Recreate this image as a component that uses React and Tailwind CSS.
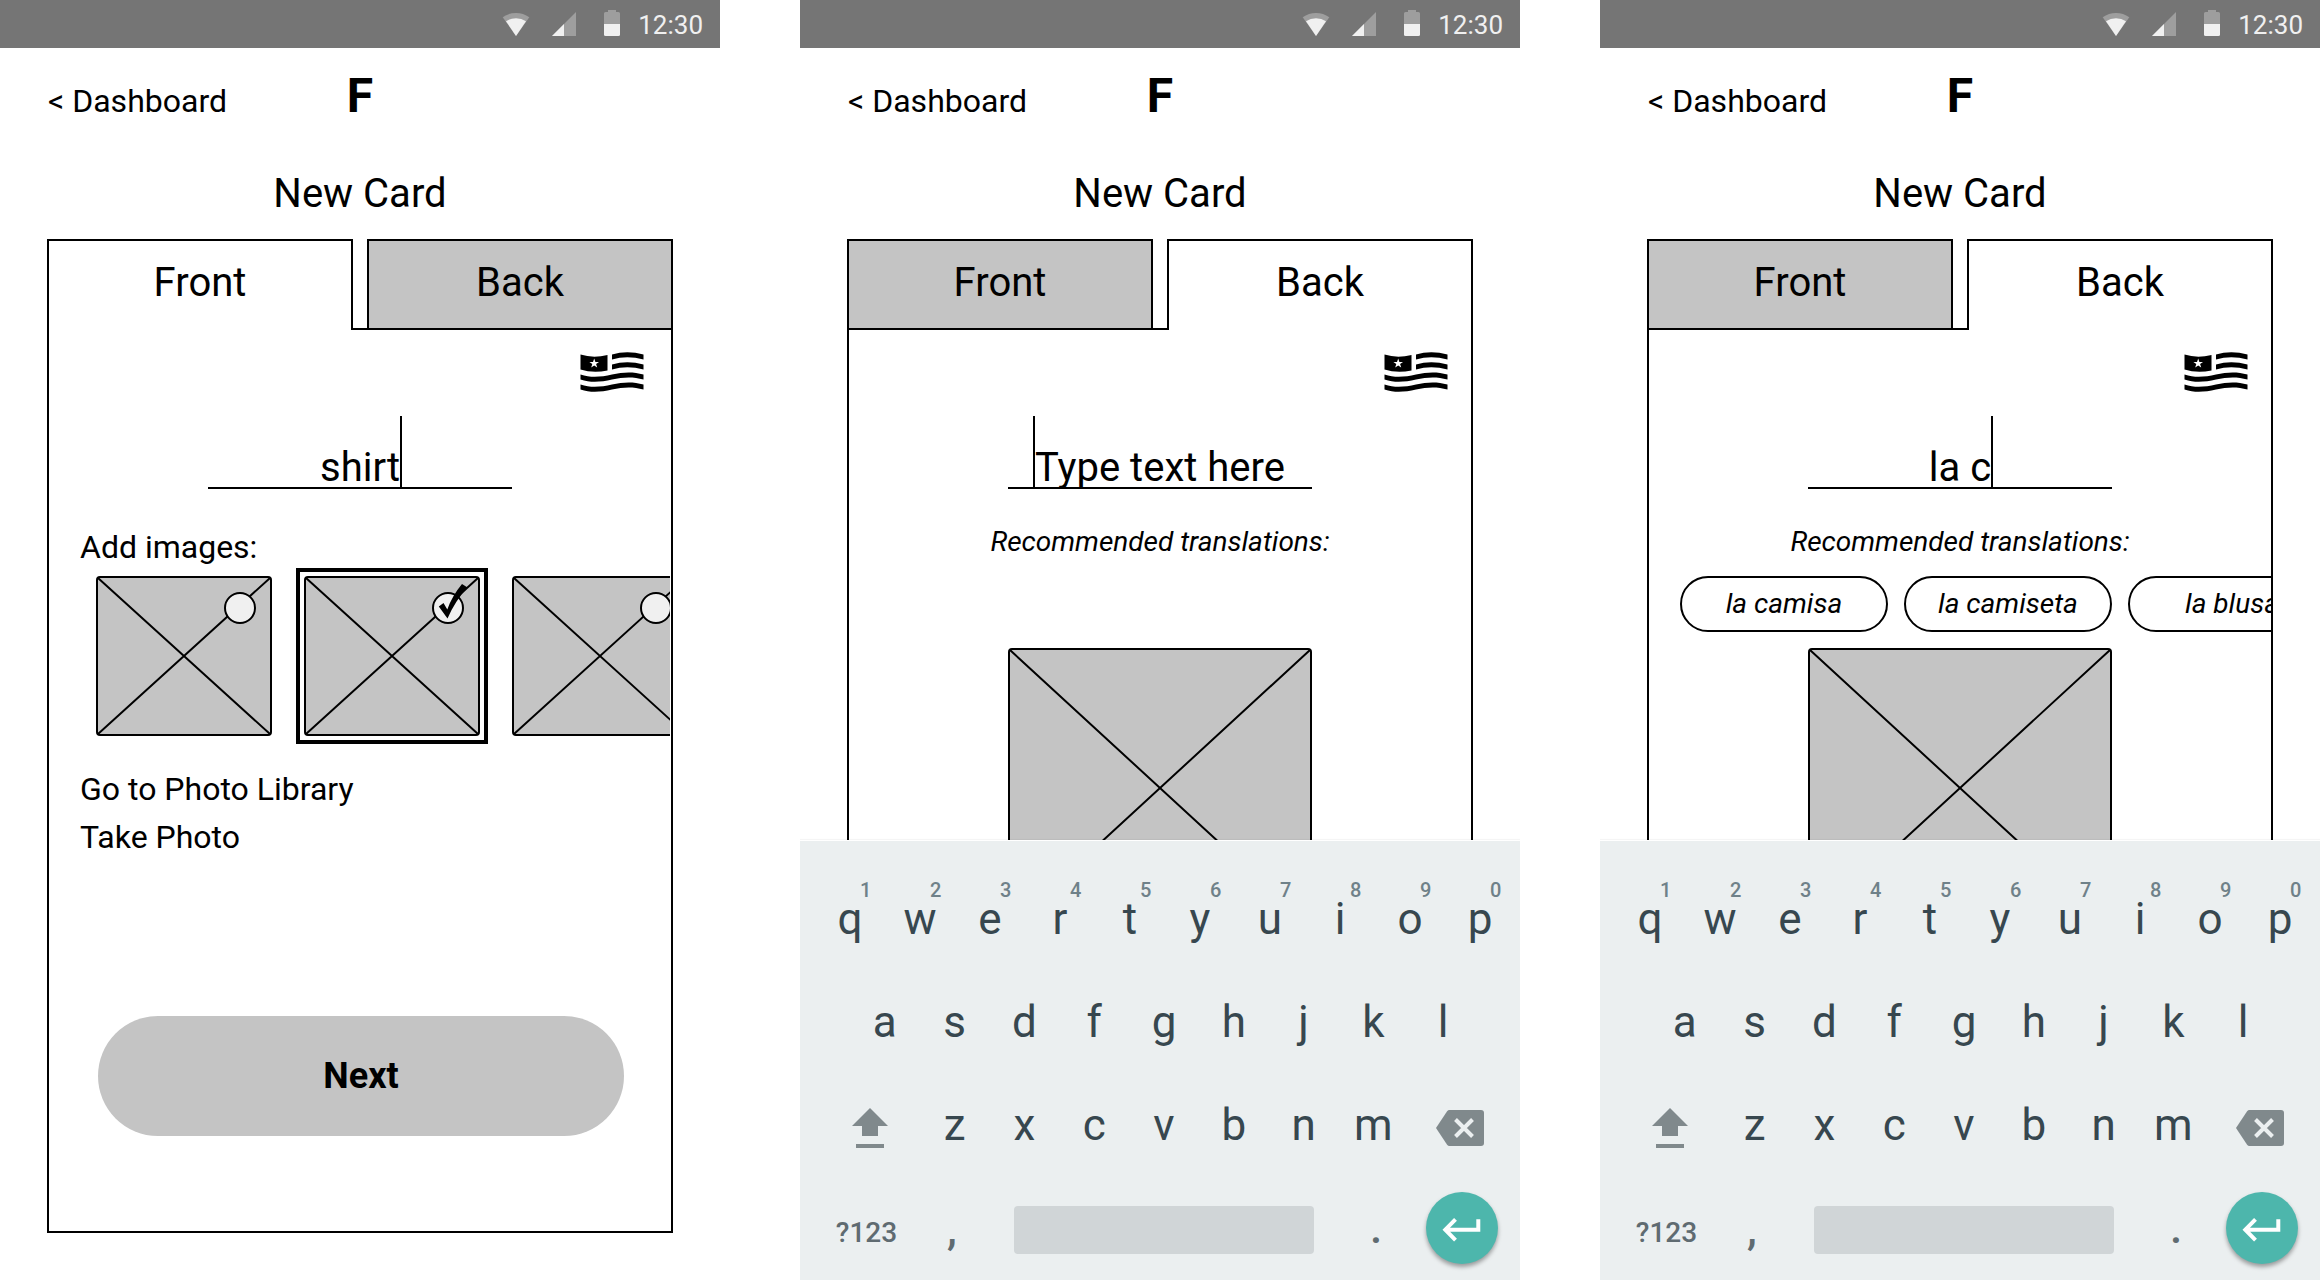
import { useState } from "react";

const LETTERS_TOP = ["q", "w", "e", "r", "t", "y", "u", "i", "o", "p"];
const LETTERS_HOME = ["a", "s", "d", "f", "g", "h", "j", "k", "l"];
const LETTERS_BOTTOM = ["z", "x", "c", "v", "b", "n", "m"];

function StatusBar() {
  return (
    <div className="flex h-12 shrink-0 items-center justify-end bg-[#757575] pr-[17px] text-[26px] leading-8 text-[#f0f0f0]">
      <svg className="mr-[22px] h-6 w-7" viewBox="0 0 28 24" aria-hidden="true">
        <path d="M14 24 0.7 5.2a22.8 22.8 0 0 1 26.6 0z" fill="#9e9e9e" />
        <path d="M14 24 4 9.2a18 18 0 0 1 20 0z" fill="#f0f0f0" />
      </svg>
      <svg className="mr-7 h-6 w-6" viewBox="0 0 24 24" aria-hidden="true">
        <path d="M0 24 24 0v24z" fill="#9e9e9e" />
        <path d="M0 24 12 12v12z" fill="#f0f0f0" />
      </svg>
      <svg className="mr-[18px] mb-[2px] h-[26px] w-4" viewBox="0 0 16 26" aria-hidden="true">
        <path d="M4 0h8v2h2.5A1.5 1.5 0 0 1 16 3.500V14H0V3.500A1.500 1.500 0 0 1 1.500 2H4z" fill="#9e9e9e" />
        <path d="M0 14h16v10.500a1.500 1.500 0 0 1-1.500 1.500h-13A1.500 1.500 0 0 1 0 24.500z" fill="#f0f0f0" />
      </svg>
      <span className="pt-[2px]">12:30</span>
    </div>
  );
}

function Flag() {
  return (
    <svg className="h-10 w-16" viewBox="0 0 64 40" role="img" aria-label="Card language">
      <path d="M0.500 2.500Q13 6.500 27.500 3v15.500Q13 21.500 0.500 17.500z" />
      <path d="M32 2.500Q47-2 63.500 2.500v5Q47 3 32 7.500z" />
      <path d="M32 12.500Q47 8 63.500 12.500v5Q47 13 32 17.500z" />
      <path d="M0.500 22.500C11 26 21 25 32 22.500S53 19.500 63.500 22.500v5C53 24.500 43 25 32 27.500S11 31 0.500 27.500z" />
      <path d="M0.500 32.500C11 36 21 35 32 32.500S53 29.500 63.500 32.500v5C53 34.500 43 35 32 37.500S11 41 0.500 37.500z" />
      <path d="M14.200 6.500l1.200 3.400h3.600l-2.900 2.200 1.100 3.500-3-2.100-3 2.100 1.100-3.500-2.900-2.200h3.600z" fill="#fff" />
    </svg>
  );
}

function Placeholder({ className, width, height }) {
  return (
    <svg className={className} viewBox={`0 0 ${width} ${height}`} aria-hidden="true">
      <rect x="1" y="1" width={width - 2} height={height - 2} rx="3" fill="#c4c4c4" stroke="#000" strokeWidth="2" />
      <path d={`M2 2 ${width - 2} ${height - 2}M${width - 2} 2 2 ${height - 2}`} stroke="#000" strokeWidth="2" />
    </svg>
  );
}

function Tabs({ active }) {
  const on = "flex h-[91px] flex-1 items-center justify-center border-2 border-b-0 border-black bg-white pb-[6px]";
  const off = "flex h-[91px] flex-1 items-center justify-center border-2 border-black bg-[#c4c4c4] pb-1";
  return (
    <div className="flex text-[40px] leading-10" role="tablist">
      <button type="button" role="tab" aria-selected={active === "front"} className={active === "front" ? on : off}>
        Front
      </button>
      <div className="w-[14px] border-b-2 border-black" />
      <button type="button" role="tab" aria-selected={active === "back"} className={active === "back" ? on : off}>
        Back
      </button>
    </div>
  );
}

function WordField({ label, initial, caret }) {
  const [text, setText] = useState(initial);
  return (
    <div className="mx-auto mt-6 flex h-[73px] w-[304px] items-end justify-center border-b-2 border-black">
      <div className="relative flex h-full items-end">
        <input
          type="text"
          aria-label={label}
          placeholder="Type text here"
          value={text}
          onChange={(event) => setText(event.target.value)}
          className="field-sizing-content h-10 bg-transparent text-center text-[40px] leading-10 outline-none placeholder:text-black placeholder:opacity-100"
        />
        <span className={caret === "start" ? "absolute inset-y-0 right-full w-[2px] bg-black" : "absolute inset-y-0 left-full w-[2px] bg-black"} />
      </div>
    </div>
  );
}

function Screen({ active, children, keyboard }) {
  return (
    <section className="flex h-screen min-w-0 flex-col overflow-hidden bg-white">
      <StatusBar />
      <div className={keyboard ? "flex min-h-0 flex-1 flex-col overflow-hidden" : "flex min-h-0 flex-1 flex-col pb-[47px]"}>
        <nav className="mt-5 grid shrink-0 grid-cols-[1fr_auto_1fr] items-baseline px-12">
          <a href="#dashboard" className="text-[32px] leading-[56px]">
            &lt; Dashboard
          </a>
          <span className="text-[48px] leading-[56px] font-bold">F</span>
        </nav>
        <h1 className="mt-[41px] shrink-0 text-center text-[40px] leading-[48px]">New Card</h1>
        <div className="mt-[21px] flex flex-1 flex-col px-[47px]">
          <Tabs active={active} />
          <div className="flex flex-1 flex-col border-x-2 border-b-2 border-black pt-[22px]">{children}</div>
        </div>
      </div>
      {keyboard ? <Keyboard /> : null}
    </section>
  );
}

function Thumb({ name, defaultChecked }) {
  const [checked, setChecked] = useState(Boolean(defaultChecked));
  return (
    <label className={checked ? "relative block shrink-0 border-4 border-black p-1" : "relative block shrink-0 p-2"}>
      <Placeholder className="h-[160px] w-[176px]" width={176} height={160} />
      <input
        type="checkbox"
        aria-label={name}
        checked={checked}
        onChange={(event) => setChecked(event.target.checked)}
        className={
          checked
            ? "absolute top-5 right-5 size-8 appearance-none rounded-full border-2 border-black bg-[#f0f0f0]"
            : "absolute top-6 right-6 size-8 appearance-none rounded-full border-2 border-black bg-[#f0f0f0]"
        }
      />
      {checked ? (
        <svg className="pointer-events-none absolute top-3 right-4 h-9 w-[30px]" viewBox="0 0 30 36" aria-hidden="true">
          <path d="M0.800 22.500 5.500 19 9.300 25.500Q14 12 24 0L29.500 3.500Q17 17 9.500 34.500z" />
        </svg>
      ) : null}
    </label>
  );
}

function Key({ children, hint }) {
  return (
    <button type="button" className="relative col-span-2 flex items-center justify-center">
      {hint ? (
        <span className="absolute top-[10px] left-1/2 ml-[10px] text-[20px] leading-6 font-medium text-[#6f8189]">{hint}</span>
      ) : null}
      {children}
    </button>
  );
}

function Keyboard() {
  const row = "grid flex-1 grid-cols-20";
  const innerRow = "grid flex-1 grid-cols-20 pr-[2px]";
  return (
    <div className="relative flex h-[440px] shrink-0 flex-col border-t border-white bg-[#ebeff0] pt-[27px] pr-[5px] pl-[15px] text-[44px] leading-[52px] text-[#37474f] shadow-[0_-1px_1px_rgba(0,0,0,0.04)]">
      <div className={row}>
        {LETTERS_TOP.map((letter, index) => (
          <Key key={letter} hint={String((index + 1) % 10)}>
            {letter}
          </Key>
        ))}
      </div>
      <div className={innerRow}>
        <span />
        {LETTERS_HOME.map((letter) => (
          <Key key={letter}>{letter}</Key>
        ))}
      </div>
      <div className={innerRow}>
        <button type="button" aria-label="Shift" className="col-span-3 flex items-center justify-center pl-[5px]">
          <svg className="h-[47px] w-9" viewBox="0 -7 36 47" fill="#80898c" aria-hidden="true">
            <path d="M18 0 36 18H26v10H10V18H0zM4 36h28v4H4z" />
          </svg>
        </button>
        {LETTERS_BOTTOM.map((letter) => (
          <Key key={letter}>{letter}</Key>
        ))}
        <button type="button" aria-label="Backspace" className="col-span-3 flex items-center justify-center pr-[2px]">
          <svg className="h-[43px] w-12" viewBox="0 -7 48 43" aria-hidden="true">
            <path d="M13.500 0H45a3 3 0 0 1 3 3v30a3 3 0 0 1-3 3H13.500a3 3 0 0 1-2.400-1.300L0 18 11.100 1.300A3 3 0 0 1 13.500 0z" fill="#80898c" />
            <path d="M19.500 9.500l17 17M36.500 9.500l-17 17" stroke="#ebeff0" strokeWidth="4" />
          </svg>
        </button>
      </div>
      <div className="grid flex-1 grid-cols-[103fr_96fr_300fr_112fr_89fr] items-center pb-px text-[#5f6b71]">
        <button type="button" className="pt-[10px] text-[28px] leading-8 font-medium">
          ?123
        </button>
        <button type="button" className="pt-[2px] pr-[28px] font-medium">
          ,
        </button>
        <button type="button" aria-label="Space" className="mt-1 h-12 rounded-sm bg-[#d0d5d7]" />
        <button type="button" className="pl-3 font-medium">
          .
        </button>
        <button
          type="button"
          aria-label="Enter"
          className="size-[72px] rounded-full bg-[#4db6ac] shadow-[0_3px_4px_rgba(0,0,0,0.35)]"
        >
          <svg className="size-[72px]" viewBox="0 0 72 72" fill="none" stroke="#fff" strokeWidth="4" aria-hidden="true">
            <path d="M52.300 27.300v10.400H20M29.500 27.300 19.300 37.700l10.200 10.400" />
          </svg>
        </button>
      </div>
    </div>
  );
}

function FrontScreen() {
  return (
    <Screen active="front">
      <div className="flex justify-end pr-[27px]">
        <Flag />
      </div>
      <WordField label="Front text" initial="shirt" caret="end" />
      <p className="mt-10 pl-[31px] text-[32px] leading-9">Add images:</p>
      <div className="mt-[3px] mr-px flex gap-4 overflow-hidden pl-[39px]">
        <Thumb name="Image 1" />
        <Thumb name="Image 2" defaultChecked />
        <Thumb name="Image 3" />
      </div>
      <div className="mt-[21px] flex flex-col items-start pl-[31px] text-[32px] leading-[48px]">
        <button type="button">Go to Photo Library</button>
        <button type="button">Take Photo</button>
      </div>
      <button
        type="button"
        className="mt-auto mr-[47px] mb-[95px] ml-[49px] h-[120px] rounded-full bg-[#c4c4c4] text-[36px] leading-10 font-bold"
      >
        Next
      </button>
    </Screen>
  );
}

function BackScreen({ text, caret, suggestions }) {
  return (
    <Screen active="back" keyboard>
      <div className="flex justify-end pr-[23px]">
        <Flag />
      </div>
      <WordField label="Back text" initial={text} caret={caret} />
      <p className="mt-[35px] text-center text-[28px] leading-9 italic">Recommended translations:</p>
      <div className="mt-4 flex h-14 shrink-0 gap-4 overflow-hidden pl-[31px]">
        {suggestions.map((word) => (
          <button
            key={word}
            type="button"
            className="h-14 w-[208px] shrink-0 rounded-full border-2 border-black text-[28px] leading-9 italic"
          >
            {word}
          </button>
        ))}
      </div>
      <Placeholder className="mx-auto mt-4 h-[280px] w-[304px] shrink-0" width={304} height={280} />
    </Screen>
  );
}

export default function App() {
  return (
    <main className="grid grid-cols-3 gap-20 bg-white font-[Roboto,sans-serif] text-black">
      <FrontScreen />
      <BackScreen text="" caret="start" suggestions={[]} />
      <BackScreen text="la c" caret="end" suggestions={["la camisa", "la camiseta", "la blusa"]} />
    </main>
  );
}
